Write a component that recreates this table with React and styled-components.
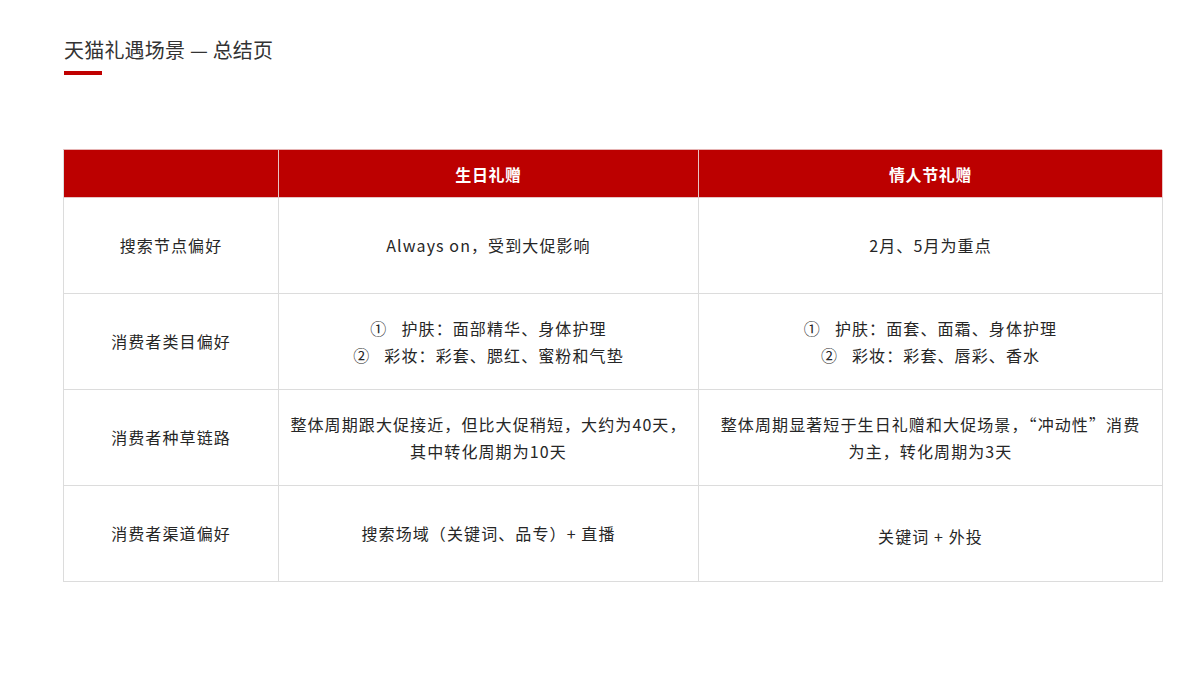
import React from "react";
import styled, { createGlobalStyle } from "styled-components";

const Global = createGlobalStyle`
  html, body { margin: 0; padding: 0; background: #ffffff; }
  body {
    font-family: "Noto Sans CJK SC", "Noto Sans", sans-serif;
    color: #333333;
  }
`;

const Page = styled.div`
  width: 1200px;
  height: 675px;
  box-sizing: border-box;
  padding: 36px 38px 0 63px;
  background: #ffffff;
`;

const Title = styled.h1`
  margin: 0 0 0 1px;
  font-size: 20px;
  line-height: 28px;
  font-weight: 400;
  color: #333333;
  letter-spacing: 0.2px;
`;

const Accent = styled.div`
  margin: 7px 0 0 1px;
  width: 38px;
  height: 4px;
  background: #c00000;
`;

const Table = styled.div`
  margin-top: 74px;
  display: grid;
  grid-template-columns: 215px 420px 464px;
  grid-template-rows: 48px repeat(4, 96px);
  width: 1099px;
  border-top: 1.5px solid #e6b3b3;
  border-left: 1.5px solid #dcdcdc;
  box-sizing: border-box;
`;

const HeadCell = styled.div`
  background: #bc0000;
  color: #ffffff;
  display: flex;
  align-items: center;
  justify-content: center;
  font-size: 16px;
  font-weight: 700;
  letter-spacing: 0.6px;
  border-right: 1.5px solid #e8c4c4;
  border-bottom: 1.5px solid #e8c4c4;
`;

const Cell = styled.div`
  display: flex;
  flex-direction: column;
  align-items: center;
  justify-content: center;
  text-align: center;
  padding: ${(p) => (p.$shift ? `${p.$shift}px 8px 0` : "0 8px")};
  font-size: 16px;
  line-height: 27px;
  letter-spacing: 1.1px;
  color: #262626;
  border-right: 1.5px solid #dcdcdc;
  border-bottom: 1.5px solid #dcdcdc;
`;

const Line = styled.span`
  display: block;
  white-space: nowrap;
`;

const Num = styled.span`
  display: inline-block;
  margin-right: 14px;
`;

const rows = [
  {
    label: "搜索节点偏好",
    a: [<Line key="1">Always on，受到大促影响</Line>],
    b: [<Line key="1">2月、5月为重点</Line>],
  },
  {
    label: "消费者类目偏好",
    a: [
      <Line key="1"><Num>①</Num>护肤：面部精华、身体护理</Line>,
      <Line key="2"><Num>②</Num>彩妆：彩套、腮红、蜜粉和气垫</Line>,
    ],
    b: [
      <Line key="1"><Num>①</Num>护肤：面套、面霜、身体护理</Line>,
      <Line key="2"><Num>②</Num>彩妆：彩套、唇彩、香水</Line>,
    ],
  },
  {
    label: "消费者种草链路",
    a: [
      <Line key="1">整体周期跟大促接近，但比大促稍短，大约为40天，</Line>,
      <Line key="2">其中转化周期为10天</Line>,
    ],
    b: [
      <Line key="1">整体周期显著短于生日礼赠和大促场景，“冲动性”消费</Line>,
      <Line key="2">为主，转化周期为3天</Line>,
    ],
  },
  {
    label: "消费者渠道偏好",
    a: [<Line key="1">搜索场域（关键词、品专）+ 直播</Line>],
    b: [<Line key="1">关键词 + 外投</Line>],
    bShift: 6,
  },
];

export default function App() {
  return (
    <>
      <Global />
      <Page>
        <Title>天猫礼遇场景 — 总结页</Title>
        <Accent />
        <Table>
          <HeadCell />
          <HeadCell>生日礼赠</HeadCell>
          <HeadCell>情人节礼赠</HeadCell>
          {rows.map((r) => (
            <React.Fragment key={r.label}>
              <Cell>{r.label}</Cell>
              <Cell>{r.a}</Cell>
              <Cell $shift={r.bShift}>{r.b}</Cell>
            </React.Fragment>
          ))}
        </Table>
      </Page>
    </>
  );
}
